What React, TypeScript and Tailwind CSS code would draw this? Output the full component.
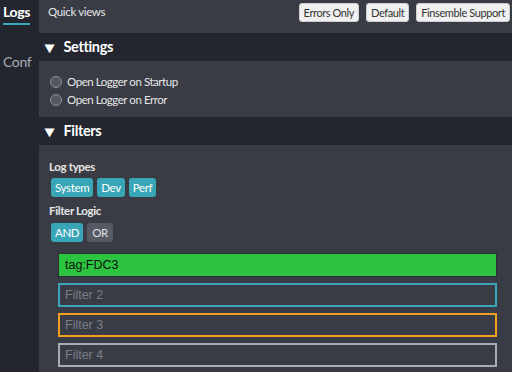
import React from "react";

const font = { fontFamily: 'Lato, "Open Sans", sans-serif' };

function Radio({ label }: { label: string }) {
  return (
    <div className="flex items-center h-[18px]">
      <span className="w-[12px] h-[12px] rounded-full border border-[#8a8d93] bg-[#565960] mr-[5px] ml-[1px]" />
      <span className="text-[11.5px] text-[#e6e6e6] tracking-[-0.45px]">{label}</span>
    </div>
  );
}

function Header({ title }: { title: string }) {
  return (
    <div className="h-[28px] bg-[#23262e] flex items-center pl-[3px]">
      <span className="text-[15px] text-white mr-[7px] leading-none scale-x-[1.15]">▼</span>
      <span className="text-[14.5px] font-bold text-white">{title}</span>
    </div>
  );
}

export default function App() {
  return (
    <div className="w-[512px] h-[372px] flex bg-[#393c45] overflow-hidden tracking-[-0.35px]" style={font}>
      <div className="w-[39px] bg-[#23262e] flex flex-col shrink-0 overflow-hidden">
        <div className="pl-[3px] pt-[1px]">
          <div className="text-[14px] font-bold text-white leading-[22px]">Logs</div>
          <div className="w-[27px] h-[2px] bg-[#39a8bb]" />
        </div>
        <div className="pl-[3px] mt-[26px] text-[14px] text-[#a9abb1] whitespace-nowrap">Conf</div>
      </div>
      <div className="flex-1 flex flex-col">
        <div className="h-[33px] bg-[#393c45] flex items-start justify-between pl-[9px] pr-[2px] pt-[3px]">
          <span className="text-[11.5px] text-[#e6e6e6] leading-[18px]">Quick views</span>
          <div className="flex gap-[7px]">
            {["Errors Only", "Default", "Finsemble Support"].map((t) => (
              <button key={t} className="h-[19px] px-[4px] rounded-[3px] bg-[#f0f0f0] border border-[#cfcfcf] text-[11px] tracking-[-0.4px] text-[#333] leading-none">
                {t}
              </button>
            ))}
          </div>
        </div>
        <Header title="Settings" />
        <div className="h-[56px] pl-[10px] pt-[12px]">
          <Radio label="Open Logger on Startup" />
          <Radio label="Open Logger on Error" />
        </div>
        <Header title="Filters" />
        <div className="flex flex-col pl-[10px] pt-[14px]">
          <div className="text-[11.5px] font-bold text-[#e6e6e6] leading-[15px]">Log types</div>
          <div className="flex gap-[4px] mt-[4px] ml-[2px]">
            {["System", "Dev", "Perf"].map((t) => (
              <span key={t} className="h-[19px] px-[4px] rounded-[3px] bg-[#39a6b8] text-[11.5px] text-white flex items-center">
                {t}
              </span>
            ))}
          </div>
          <div className="text-[11.5px] font-bold text-[#e6e6e6] leading-[15px] mt-[6px]">Filter Logic</div>
          <div className="flex gap-[4px] mt-[5px] ml-[2px]">
            <span className="h-[19px] px-[4px] rounded-[3px] bg-[#39a6b8] text-[11.5px] text-white flex items-center">AND</span>
            <span className="h-[19px] px-[5px] rounded-[3px] bg-[#565a65] text-[11.5px] text-[#e0e0e0] flex items-center">OR</span>
          </div>
          <div className="flex flex-col gap-[6px] mt-[11px] ml-[9px] w-[439px] tracking-normal" style={{ fontFamily: '"Liberation Sans", Arial, sans-serif' }}>
            <div className="h-[24px] bg-[#2bc340] border border-[#2a2f3a] flex items-center px-[6px] text-[12.5px] text-[#111]">tag:FDC3</div>
            <div className="h-[24px] border-2 border-[#3aa4b8] flex items-center px-[5px] text-[12.5px] text-[#7b7e86]">Filter 2</div>
            <div className="h-[24px] border-2 border-[#f0a022] flex items-center px-[5px] text-[12.5px] text-[#7b7e86]">Filter 3</div>
            <div className="h-[24px] border-2 border-[#a8aab4] flex items-center px-[5px] text-[12.5px] text-[#7b7e86]">Filter 4</div>
          </div>
        </div>
      </div>
    </div>
  );
}
